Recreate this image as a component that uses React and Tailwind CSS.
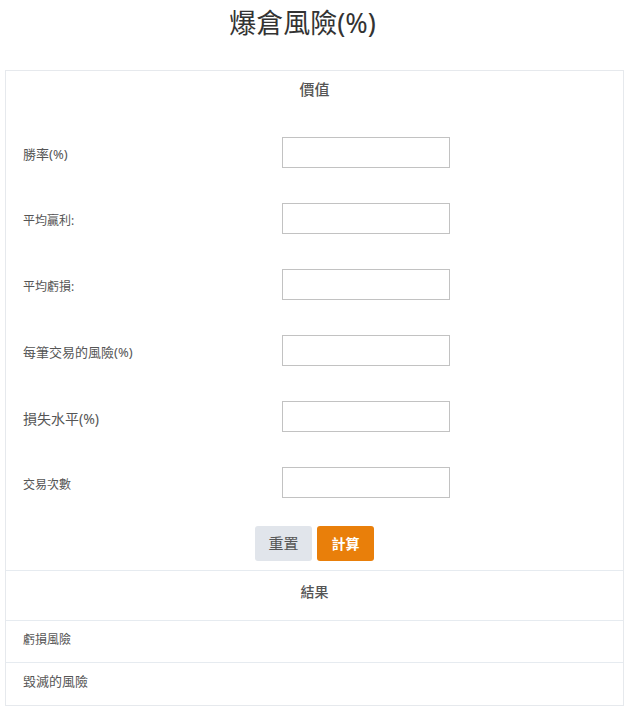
const inputs = [
  { label: "勝率(%)", size: "text-[13px]" },
  { label: "平均贏利:", size: "text-[12px]" },
  { label: "平均虧損:", size: "text-[12px]" },
  { label: "每筆交易的風險(%)", size: "text-[13px]" },
  { label: "損失水平(%)", size: "text-[14px]" },
  { label: "交易次數", size: "text-[12px]" },
];

const results = [
  { label: "虧損風險", size: "text-[12px]" },
  { label: "毀滅的風險", size: "text-[13px]" },
];

export default function App() {
  return (
    <div className="w-[629px] bg-white font-['Noto_Sans','Noto_Sans_CJK_TC',sans-serif] text-[#555]">
      {/* Title */}
      <div className="h-[44px] mb-[26px] pr-[24px] flex items-center justify-center">
        <h1 className="text-[27px] leading-none text-[#333]">爆倉風險(%)</h1>
      </div>

      <div className="mx-[5px] border border-[#e6e9ed]">
        {/* Inputs */}
        <div className="h-[38px] pb-[2px] flex items-center justify-center text-[15px] font-medium text-[#555]">
          價值
        </div>
        <div className="pt-[10px]">
          {inputs.map((row) => (
            <div key={row.label} className="h-[66px] flex items-center pl-[17px]">
              <label className={`w-[259px] pt-[5px] ${row.size}`}>{row.label}</label>
              <input
                type="text"
                className="w-[168px] h-[31px] border border-[#c2c2c2] bg-white outline-none"
              />
            </div>
          ))}
        </div>
        <div className="mt-[11px] pb-[9px] flex justify-center gap-[5px] border-b border-[#e6ebf0]">
          <button className="w-[57px] h-[35px] rounded-[3px] bg-[#e1e5eb] text-[15px] text-[#555]">
            重置
          </button>
          <button className="w-[57px] h-[35px] rounded-[3px] bg-[#e97f0a] text-[14px] font-bold text-white">
            計算
          </button>
        </div>

        {/* Results */}
        <div className="h-[50px] pb-[9px] flex items-center justify-center text-[14px] font-medium border-b border-[#e6ebf0]">
          結果
        </div>
        {results.map((row, i) => (
          <div
            key={row.label}
            className={`h-[42px] pb-[4px] flex items-center pl-[17px] ${row.size} ${
              i < results.length - 1 ? "border-b border-[#e6ebf0]" : ""
            }`}
          >
            {row.label}
          </div>
        ))}
      </div>
    </div>
  );
}
